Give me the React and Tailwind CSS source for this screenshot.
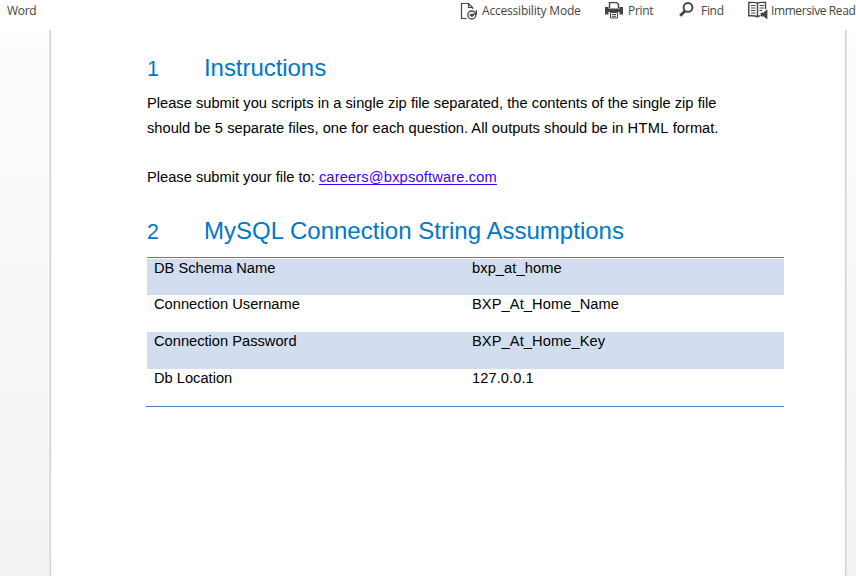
import React from "react";

const AccessibilityIcon = () => (
  <svg width="18" height="19" viewBox="0 0 18 19" fill="none" stroke="#444" className="block">
    <path d="M6.5 17.5h-5v-15h7l4 4V8M8.5 2.5v4h4" strokeWidth="1.2" />
    <circle cx="11.8" cy="14" r="4" strokeWidth="1.3" />
    <path d="M16.3 9.2v3.9h-3.9" strokeWidth="1.4" />
    <path d="M9.6 14c1.2-1.5 3.2-1.5 4.4.2-1.2 1.6-3.2 1.6-4.4-.2z" fill="#444" strokeWidth=".6" />
  </svg>
);

const PrintIcon = () => (
  <svg width="18" height="19" viewBox="0 0 18 19" className="block">
    <path d="M4.5 8V2.6h7.2l1.8 1.8V8" fill="none" stroke="#444" strokeWidth="1.4" />
    <path d="M0 7h3.5v1.5h11V7H18v7.5h-3.5V12h-11v2.5H0z" fill="#444" />
    <path d="M5.5 12.5h7v5.5h-7zM7 14.5h4M7 16.3h4" fill="#fff" stroke="#444" strokeWidth="1" />
  </svg>
);

const FindIcon = () => (
  <svg width="16" height="16" viewBox="0 0 16 16" fill="none" stroke="#444" className="block">
    <circle cx="9" cy="5.4" r="4.4" strokeWidth="1.9" />
    <path d="M6 9L1.2 13.8" strokeWidth="2.8" />
  </svg>
);

const ReaderIcon = () => (
  <svg width="20" height="19" viewBox="0 0 20 19" fill="none" stroke="#444" className="block">
    <path d="M9.5 3.2C8 2.2 5 2.2.8 2.5v13.3c3.8-.3 6.9-.1 8.7 1 .8-.6 1.8-.9 2.8-1M9.5 3.2C11 2.2 14 2.2 17.5 2.5V9M9.5 3v13.7" strokeWidth="1.4" />
    <path d="M3 5.5h4.5M3 8h4.5M3 10.5h4.5M3 13h4.5M11.5 5.5H16M11.5 8H16M11.5 10.5H14" />
    <path d="M13 13h2.5L19 9.8v8.9L15.5 16H13z" fill="#444" strokeWidth=".8" />
  </svg>
);

const rows = [
  ["DB Schema Name", "bxp_at_home", "h-[37px] border-t border-white bg-[#d2deef]"],
  ["Connection Username", "BXP_At_Home_Name", "h-[37px]"],
  ["Connection Password", "BXP_At_Home_Key", "h-[37px] bg-[#d2deef]"],
  ["Db Location", "127.0.0.1", "h-[37px]"],
];

const toolText = "whitespace-nowrap text-[12px] leading-[18px]";

export default function App() {
  return (
    <div className="flex h-[576px] w-[856px] flex-col overflow-hidden bg-white font-['Liberation_Sans',Arial,sans-serif]">
      <header className="flex h-[30px] shrink-0 items-start overflow-hidden pl-[7px] pt-[2px] font-['Open_Sans','Noto_Sans',sans-serif] text-[#444]">
        <span className={`${toolText} w-[453px] shrink-0 tracking-[-0.3px]`}>Word</span>
        <div className="flex w-[145px] shrink-0">
          <div className="-mt-[1px] w-[22px] shrink-0"><AccessibilityIcon /></div>
          <span className={`${toolText} tracking-[-0.2px]`}>Accessibility Mode</span>
        </div>
        <div className="flex w-[74px] shrink-0">
          <div className="-mt-[2px] w-[23px] shrink-0"><PrintIcon /></div>
          <span className={`${toolText} tracking-[-0.3px]`}>Print</span>
        </div>
        <div className="flex w-[69px] shrink-0">
          <div className="w-[22px] shrink-0"><FindIcon /></div>
          <span className={`${toolText} tracking-[-0.3px]`}>Find</span>
        </div>
        <div className="flex shrink-0">
          <div className="-mt-[2px] w-[23px] shrink-0"><ReaderIcon /></div>
          <span className={`${toolText} tracking-[-0.4px]`}>Immersive Read</span>
        </div>
      </header>
      <div className="flex flex-1 bg-linear-to-b from-[#fdfdfd] to-[#f2f2f2]">
        <div className="w-[49px] shrink-0" />
        <div className="w-px shrink-0 bg-[#e4e5e8]" />
        <main className="w-[796px] shrink-0 border-x border-[#cdd0d7] bg-white pl-[95px] pt-[24px] text-[14.67px] text-black">
          <h1 className="flex items-baseline pl-[1px] text-[24px] leading-[28px] text-[#0077c8]">
            <span className="w-[57px] text-[21.33px]">1</span>
            <span className="tracking-[-0.05px]">Instructions</span>
          </h1>
          <p className="mt-[8px] pl-[1px] leading-[25px]">
            <span className="block whitespace-nowrap [word-spacing:0.1px]">Please submit you scripts in a single zip file separated, the contents of the single zip file</span>
            <span className="block whitespace-nowrap [word-spacing:0.1px]">should be 5 separate files, one for each question. All outputs should be in <span className="tracking-[0.3px]">HTML</span> format.</span>
          </p>
          <p className="mt-[24px] whitespace-nowrap pl-[1px] leading-[25px]">
            Please submit your file to: <a className="tracking-[0.15px] text-[#3f00ff] underline decoration-1 underline-offset-[2px] [text-decoration-skip-ink:none]">careers@bxpsoftware.com</a>
          </p>
          <h1 className="mt-[27px] flex items-baseline whitespace-nowrap pl-[1px] text-[24px] leading-[28px] text-[#0077c8]">
            <span className="w-[57px] text-[21.33px]">2</span>
            <span className="tracking-[0.02px]">MySQL Connection String Assumptions</span>
          </h1>
          <div className="mt-[11px] w-[638px] border-b border-[#4a7ebb]">
            <div className="ml-[1px] border-t border-[#4a7ebb]">
              {rows.map(([name, value, style]) => (
                <div key={name} className={`flex pl-[7px] leading-[18px] ${style}`}>
                  <span className="w-[318px]">{name}</span>
                  <span className="tracking-[0.08px]">{value}</span>
                </div>
              ))}
            </div>
          </div>
        </main>
        <div className="w-px shrink-0 bg-[#e4e5e8]" />
      </div>
    </div>
  );
}
